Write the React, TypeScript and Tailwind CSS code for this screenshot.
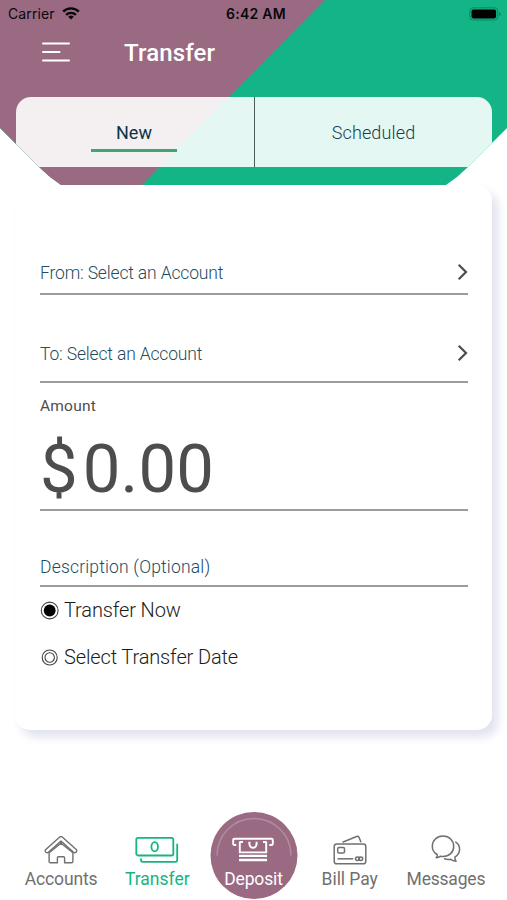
import { useState } from "react"
import type { ReactNode } from "react"

type IconProps = { className?: string }

function WifiIcon() {
  return (
    <svg width="18" height="13" viewBox="0 0 18 13" fill="none" stroke="#08080a" strokeWidth="2.4">
      <path d="M1.2 4.6a11 11 0 0 1 15.6 0" />
      <path d="M4.1 7.9a6.9 6.9 0 0 1 9.8 0" />
      <path d="M9 12.6 6.2 9.8a4 4 0 0 1 5.6 0Z" fill="#08080a" stroke="none" />
    </svg>
  )
}

function BatteryIcon() {
  return (
    <svg width="32" height="14" viewBox="0 0 32 14" fill="none">
      <rect x="0.8" y="0.8" width="28" height="12.2" rx="3.2" stroke="#0d8562" strokeWidth="1" />
      <rect x="2.5" y="2.6" width="24.6" height="8.8" rx="1.8" fill="#000" />
      <path d="M30.2 5v4c.9-.4 1.4-1.1 1.4-2s-.5-1.6-1.4-2Z" fill="#0d8562" />
    </svg>
  )
}

function MenuIcon() {
  return (
    <svg width="28" height="21" viewBox="0 0 28 21" fill="none" stroke="#fff" strokeWidth="2" strokeLinecap="round">
      <path d="M1 1.5h26M1 10h16.5M1 18.5h26" />
    </svg>
  )
}

function ChevronIcon() {
  return (
    <svg width="12" height="18" viewBox="0 0 12 18" fill="none" stroke="#4c4c4c" strokeWidth="2.2">
      <path d="M2.7 1.8 10 9l-7.300 7.200" />
    </svg>
  )
}

function HomeIcon({ className }: IconProps) {
  return (
    <svg className={className} width="34" height="28" viewBox="0 0 34 28" fill="none" stroke="currentColor" strokeWidth="1.4" strokeLinejoin="round">
      <path d="M15.2 1.5a2.600 2.600 0 0 1 3.600 0L32.200 13.400a1.900 1.900 0 0 1 .1 2.700 1.900 1.900 0 0 1-2.700.1L17 5.100 4.400 16.200a1.900 1.900 0 0 1-2.700-.1 1.900 1.900 0 0 1 .1-2.700Z" />
      <path d="M5.100 16.700v8.800c0 .8.500 1.300 1.300 1.300h7v-5c0-.7.400-1.100 1.100-1.100h5c.7 0 1.100.4 1.100 1.100v5h7c.8 0 1.300-.5 1.300-1.300v-8.800L17 7.300Z" />
    </svg>
  )
}

function CashIcon({ className }: IconProps) {
  return (
    <svg className={className} width="44" height="28" viewBox="0 0 44 28" fill="none" stroke="currentColor" strokeWidth="1.8" strokeLinecap="round">
      <rect x="1.3" y="1.8" width="37" height="17.7" rx="1.8" />
      <ellipse cx="19.7" cy="10.8" rx="3.3" ry="4.6" />
      <path d="M42.200 8.500V24c0 1.200-.6 1.800-1.800 1.800H7.800c-1.200 0-1.800-.6-1.800-1.800v-.8" />
    </svg>
  )
}

function DepositIcon({ className }: IconProps) {
  return (
    <svg className={className} width="42" height="25" viewBox="0 0 42 25" fill="none" stroke="currentColor" strokeWidth="1.9">
      <path d="M4.300 8H2.500c-.9 0-1.300-.4-1.300-1.300V3c0-.9.400-1.300 1.300-1.300h37c.9 0 1.300.4 1.300 1.300v3.700c0 .9-.4 1.300-1.300 1.300h-2.200" />
      <path d="M7.800 4.600v10.800h26.400V4.600M7.800 5H11M31 5h3.200" />
      <path d="M17.400 4.800v1.800a3.600 4.200 0 0 0 7.200 0V4.800" strokeWidth="2" />
      <path d="M7 18.900h28M7 23h28" strokeWidth="2.3" />
    </svg>
  )
}

function CardIcon({ className }: IconProps) {
  return (
    <svg className={className} width="34" height="30" viewBox="0 0 34 30" fill="none" stroke="currentColor" strokeWidth="1.5" strokeLinejoin="round">
      <path d="m9.500 7.200 14.200-5.700c1.100-.4 1.800-.2 2.300.8l2 5" />
      <rect x="1.2" y="9" width="31.6" height="19.8" rx="2.6" />
      <rect x="4.7" y="12.6" width="6.8" height="5.4" rx="1.3" />
      <path d="M4.500 23.800h15.800" />
      <ellipse cx="24.5" cy="23.8" rx="2" ry="1.7" />
      <ellipse cx="27.7" cy="23.8" rx="2" ry="1.7" />
    </svg>
  )
}

function ChatIcon({ className }: IconProps) {
  return (
    <svg className={className} width="30" height="28" viewBox="0 0 30 28" fill="none" stroke="currentColor" strokeWidth="1.5" strokeLinejoin="round">
      <path d="M5.200 22.700c.9-.9 1.200-2 1-3.200C3 17.600 1.300 14.800 1.300 11.400 1.300 5.500 5.900 1 12 1s10.700 4.500 10.700 10.400S18.100 21.500 12 21.500c-1 0-1.700-.1-2.500-.3-1.100.9-2.500 1.400-4.300 1.500Z" />
      <path d="M24.300 6.800c3 1.700 4.300 4.400 4.300 7.500 0 3.300-1.600 6-4.700 7.900-.1 1.500.3 2.800 1.200 4-2.400-.2-4.100-.9-5.300-2-2.700.5-4.900.2-6.700-.7" />
    </svg>
  )
}

const tabs = [
  { id: "accounts", label: "Accounts", Icon: HomeIcon, text: "tracking-[-0.15px]", icon: "mb-[4px]" },
  { id: "transfer", label: "Transfer", Icon: CashIcon, text: "tracking-[0px]", icon: "mb-[4px]" },
  { id: "deposit", label: "Deposit", Icon: DepositIcon, text: "tracking-[-0.15px]", icon: "mb-[6px]" },
  { id: "billpay", label: "Bill Pay", Icon: CardIcon, text: "tracking-[-0.05px]", icon: "mb-[3px]" },
  { id: "messages", label: "Messages", Icon: ChatIcon, text: "tracking-[-0.2px]", icon: "mb-[5px]" },
]

function AccountRow({ children, className }: { children: ReactNode; className: string }) {
  return (
    <button
      type="button"
      className={`flex w-full items-start justify-between border-b-2 border-[#9c9c9c] text-left text-[17.5px] leading-5 font-light tracking-[-0.16px] text-[#244c5c] ${className}`}
    >
      <span>{children}</span>
      <ChevronIcon />
    </button>
  )
}

function Radio({ checked, label, onClick }: { checked: boolean; label: string; onClick: () => void }) {
  return (
    <button type="button" role="radio" aria-checked={checked} onClick={onClick} className="flex h-6 items-center gap-[5px]">
      <svg width="19" height="19" viewBox="0 0 19 19" fill="none">
        <circle cx="9.7" cy="9.5" r={checked ? 8.4 : 7.5} stroke="#444" strokeWidth="1.1" />
        {checked ? (
          <circle cx="9.7" cy="9.5" r="5.9" fill="#000" />
        ) : (
          <circle cx="9.7" cy="9.5" r="4.7" stroke="#444" strokeWidth="1.1" />
        )}
      </svg>
      <span className="text-[20px] leading-6 font-light tracking-[-0.13px] text-[#1c1c1c]">{label}</span>
    </button>
  )
}

export default function App() {
  const [mode, setMode] = useState("now")

  return (
    <div className="flex h-[900px] w-[507px] flex-col overflow-hidden bg-white font-['Roboto',sans-serif]">
      <header className="relative h-[185px] shrink-0 bg-[#13b586] [clip-path:polygon(0_0,100%_0,100%_128px,492px_143px,468px_167px,457px_177px,446px_185px,61px_185px,50px_177px,39px_167px,15px_143px,0_128px)]">
        <div className="absolute inset-0 bg-[#9a6a83] [clip-path:polygon(0_0,325px_0,142px_185px,0_185px)]" />

        <div className="relative grid h-[27px] grid-cols-3 items-center pr-1.5 pl-2 font-['Inter',sans-serif] text-[#08080a]">
          <div className="flex items-center gap-[7px]">
            <span className="text-[14px] tracking-[0.1px]">Carrier</span>
            <WifiIcon />
          </div>
          <span className="pl-[3px] text-center text-[14px] font-semibold tracking-[0.25px]">6:42 AM</span>
          <div className="flex justify-end">
            <BatteryIcon />
          </div>
        </div>

        <div className="relative flex h-[70px] items-start pl-[42px]">
          <button type="button" aria-label="Menu" className="mt-[15px]">
            <MenuIcon />
          </button>
          <h1 className="mt-3 ml-[54px] text-[24px] leading-7 font-medium tracking-[0.15px] text-white">Transfer</h1>
        </div>

        <div className="relative mr-[15px] ml-4 grid h-[70px] grid-cols-[239px_1fr] rounded-t-[15px] bg-white/89 text-[18px] text-[#163f50]">
          <button type="button" className="flex flex-col items-center border-r border-[#4b5b57] pt-[26px] pr-[2px] leading-5 text-[#0b3444]">
            New
            <span className="mt-[6px] h-[2.5px] w-[86px] bg-[#40a56f]" />
          </button>
          <button type="button" className="flex justify-center pt-[26px] leading-5 font-light tracking-[0.15px]">
            Scheduled
          </button>
        </div>
      </header>

      <main className="mx-[15px] h-[545px] shrink-0 rounded-[15px] bg-white pr-6 pl-[25px] shadow-[6px_7px_10px_#e1e3ee]">
        <AccountRow className="h-[110px] pt-[78px]">From: Select an Account</AccountRow>
        <AccountRow className="h-[88px] pt-[49px]">To: Select an Account</AccountRow>
        <div className="h-32 border-b-2 border-[#9c9c9c] pt-[13px] text-[#4c4e4e]">
          <div className="text-[15.5px] leading-5 tracking-[0.2px]">Amount</div>
          <div className="mt-[13px] flex gap-[5px] text-[67px] leading-[80px]">
            <span>$</span>
            <span className="tracking-[0.2px]">0.00</span>
          </div>
        </div>
        <div className="h-[76px] border-b-2 border-[#9c9c9c] pt-[46px] text-[17.5px] leading-5 font-light tracking-[0.18px] text-[#174d63]">
          Description (Optional)
        </div>
        <div role="radiogroup" className="flex flex-col gap-[23px] pt-[11px]">
          <Radio checked={mode === "now"} label="Transfer Now" onClick={() => setMode("now")} />
          <Radio checked={mode === "date"} label="Select Transfer Date" onClick={() => setMode("date")} />
        </div>
      </main>

      <nav className="mt-[82px] mr-3 ml-[14px] grid h-[88px] shrink-0 grid-cols-5 text-[#707070]">
        {tabs.map(({ id, label, Icon, text, icon }) => {
          const deposit = id === "deposit"
          return (
            <button
              type="button"
              key={id}
              className={`relative flex flex-col items-center pr-[2px] ${deposit ? "text-white" : id === "transfer" ? "text-[#14b583]" : ""}`}
            >
              {deposit && (
                <span className="absolute top-0 left-1/2 h-[87px] w-[87px] -translate-x-1/2 rounded-full bg-[#9a6a83]">
                  <svg width="87" height="87" viewBox="0 0 87 87" fill="none">
                    <path d="M6.500 43.500a37 37 0 0 1 74 0" stroke="#b18b9f" strokeWidth="1.5" />
                  </svg>
                </span>
              )}
              <span className="relative flex h-[56px] items-end justify-center">
                <Icon className={icon} />
              </span>
              <span className={`relative text-[17.5px] leading-[22px] whitespace-nowrap ${text}`}>{label}</span>
            </button>
          )
        })}
      </nav>
    </div>
  )
}
